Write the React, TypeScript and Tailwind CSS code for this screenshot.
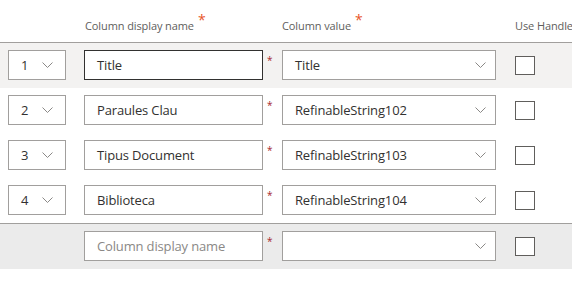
import React from "react";

const Chevron = () => (
  <svg width="11" height="7" viewBox="0 0 11 7" className="shrink-0">
    <path d="M0.5 0.5 L5.5 5.5 L10.5 0.5" fill="none" stroke="#8a8886" strokeWidth="1" />
  </svg>
);

type Row = { n: number; name: string; value: string; active?: boolean };

const rows: Row[] = [
  { n: 1, name: "Title", value: "Title", active: true },
  { n: 2, name: "Paraules Clau", value: "RefinableString102" },
  { n: 3, name: "Tipus Document", value: "RefinableString103" },
  { n: 4, name: "Biblioteca", value: "RefinableString104" },
];

const Req = () => (
  <div className="w-[19px] h-[30px] pl-[4px] text-[10px] leading-[12px] text-[#a4262c] pt-[4px]">*</div>
);

const HeadReq = () => (
  <span className="text-[#e8562a] text-[14px] leading-[12px] ml-[4px] -mt-[4px]">*</span>
);

export default function App() {
  return (
    <div
      className="w-[572px] h-[297px] bg-white overflow-hidden text-[#323130]"
      style={{ fontFamily: '"Segoe UI", "Open Sans", sans-serif' }}
    >
      <div className="flex h-[42px] items-end pb-[8px] text-[11px] tracking-[-0.1px] text-[#605e5c] whitespace-nowrap">
        <div className="w-[85px] shrink-0" />
        <div className="w-[197px] shrink-0 flex items-start">
          <span>Column display name</span>
          <HeadReq />
        </div>
        <div className="w-[233px] shrink-0 flex items-start">
          <span>Column value</span>
          <HeadReq />
        </div>
        <div className="shrink-0">Use Handle</div>
      </div>
      <div className="border-t border-[#a19f9d] text-[13px] tracking-[-0.15px]">
        {rows.map((r) => (
          <div
            key={r.n}
            className={`flex items-start h-[45px] pt-[7px] ${r.active ? "bg-[#f3f2f1]" : "bg-white"}`}
          >
            <div className="w-[8px] shrink-0" />
            <div className="w-[58px] h-[30px] shrink-0 border border-[#a19f9d] bg-white flex items-center pl-[12px] pr-[12px] justify-between">
              <span className="pt-[2px]">{r.n}</span>
              <Chevron />
            </div>
            <div className="w-[18px] shrink-0" />
            <div
              className={`w-[179px] h-[30px] shrink-0 border bg-white flex items-center pl-[12px] pt-[2px] ${r.active ? "border-[#323130]" : "border-[#a19f9d]"}`}
            >
              {r.name}
            </div>
            <Req />
            <div className="w-[214px] h-[30px] shrink-0 border border-[#a19f9d] bg-white flex items-center justify-between pl-[12px] pr-[9px]">
              <span className="pt-[2px]">{r.value}</span>
              <Chevron />
            </div>
            <div className="w-[19px] shrink-0" />
            <div className="w-[20px] h-[19px] mt-[6px] shrink-0 border border-[#605e5c] bg-white" />
          </div>
        ))}
      </div>
      <div className="border-t border-[#a19f9d] bg-[#ebebeb] h-[46px] flex items-start pt-[7px] text-[13px] tracking-[-0.15px]">
        <div className="w-[84px] shrink-0" />
        <div className="w-[179px] h-[30px] shrink-0 border border-[#a19f9d] bg-white flex items-center pl-[12px] pt-[2px] text-[#8a8886]">
          Column display name
        </div>
        <Req />
        <div className="w-[214px] h-[30px] shrink-0 border border-[#a19f9d] bg-white flex items-center justify-end pr-[9px]">
          <Chevron />
        </div>
        <div className="w-[19px] shrink-0" />
        <div className="w-[20px] h-[19px] mt-[6px] shrink-0 border border-[#605e5c] bg-white" />
      </div>
    </div>
  );
}
